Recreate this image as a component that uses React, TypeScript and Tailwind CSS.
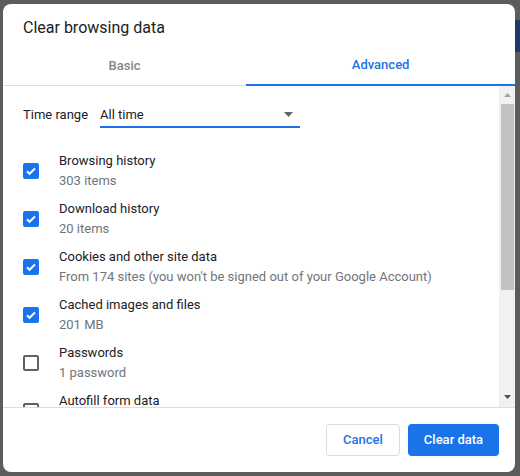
import React from 'react';

const ITEMS = [
  { title: 'Browsing history', sub: '303 items', checked: true },
  { title: 'Download history', sub: '20 items', checked: true },
  { title: 'Cookies and other site data', sub: "From 174 sites (you won't be signed out of your Google Account)", checked: true },
  { title: 'Cached images and files', sub: '201 MB', checked: true },
  { title: 'Passwords', sub: '1 password', checked: false },
  { title: 'Autofill form data', sub: '3 suggestions', checked: false },
];

function Checkbox({ checked }: { checked: boolean }) {
  if (checked)
    return (
      <div className="w-[16px] h-[16px] rounded-[2px] bg-[#1a73e8] flex items-center justify-center shrink-0">
        <svg width="12" height="12" viewBox="0 0 12 12">
          <path d="M2 6.2l2.6 2.6L10 3.4" fill="none" stroke="#fff" strokeWidth="2" />
        </svg>
      </div>
    );
  return <div className="w-[16px] h-[16px] rounded-[2px] border-2 border-[#5f6368] shrink-0" />;
}

export default function App() {
  return (
    <div className="w-[520px] h-[476px] bg-[#5c5c5c] pt-[4px] pl-[3px] flex font-['Roboto',sans-serif] overflow-hidden">
      <div className="w-[512px] h-[468px] bg-white rounded-[8px] flex flex-col overflow-hidden">
        <div className="h-[40px] pt-[13px] pl-[20px] text-[16px] leading-[22px] text-[#202124]">Clear browsing data</div>

        <div className="flex h-[42px] border-b border-[#dadce0] text-[13px] font-medium">
          <div className="flex-auto flex items-center justify-center pt-[2px] text-[#80868b]">Basic</div>
          <div className="flex-auto flex items-center justify-center pt-[2px] text-[#1a73e8] border-b-2 border-[#1a73e8] -mb-px">Advanced</div>
        </div>

        <div className="h-[321px] flex">
          <div className="flex-1 overflow-hidden pl-[20px]">
            <div className="h-[58px] flex items-center text-[13px] text-[#202124]">
              <span className="w-[77px]">Time range</span>
              <div className="w-[200px] h-[26px] border-b-2 border-[#1a73e8] flex items-center justify-between pr-[7px] pt-[1px]">
                <span>All time</span>
                <svg width="9" height="5" viewBox="0 0 9 5">
                  <polygon points="0,0 9,0 4.5,5" fill="#5f6368" />
                </svg>
              </div>
            </div>
            <div className="pt-[3px]">
              {ITEMS.map((it) => (
                <div key={it.title} className="h-[48px] flex items-center">
                  <Checkbox checked={it.checked} />
                  <div className="ml-[20px] text-[13px] leading-[20px]">
                    <div className="text-[#202124]">{it.title}</div>
                    <div className="text-[#70757a]">{it.sub}</div>
                  </div>
                </div>
              ))}
            </div>
          </div>
          <div className="w-[16px] bg-[#f1f1f1] flex flex-col items-center">
            <div className="h-[16px] flex items-center justify-center pt-[2px]">
              <svg width="7" height="4" viewBox="0 0 7 4">
                <polygon points="0,4 7,4 3.5,0" fill="#a3a3a3" />
              </svg>
            </div>
            <div className="mt-[2px] w-[13px] h-[186px] bg-[#c1c1c1]" />
            <div className="flex-1" />
            <div className="h-[18px] flex items-center justify-center pb-[2px]">
              <svg width="7" height="4" viewBox="0 0 7 4">
                <polygon points="0,0 7,0 3.5,4" fill="#505050" />
              </svg>
            </div>
          </div>
        </div>

        <div className="border-t border-[#dadce0] flex justify-end gap-[8px] px-[16px] py-[16px]">
          <button className="w-[74px] h-[32px] rounded-[4px] border border-[#dadce0] text-[#1a73e8] text-[13px] font-medium bg-white">Cancel</button>
          <button className="w-[91px] h-[32px] rounded-[4px] bg-[#1a73e8] text-white text-[13px] font-medium">Clear data</button>
        </div>
      </div>
      <div className="w-[5px] h-[32px] mt-[16px] bg-[#1c3a66]" />
    </div>
  );
}
